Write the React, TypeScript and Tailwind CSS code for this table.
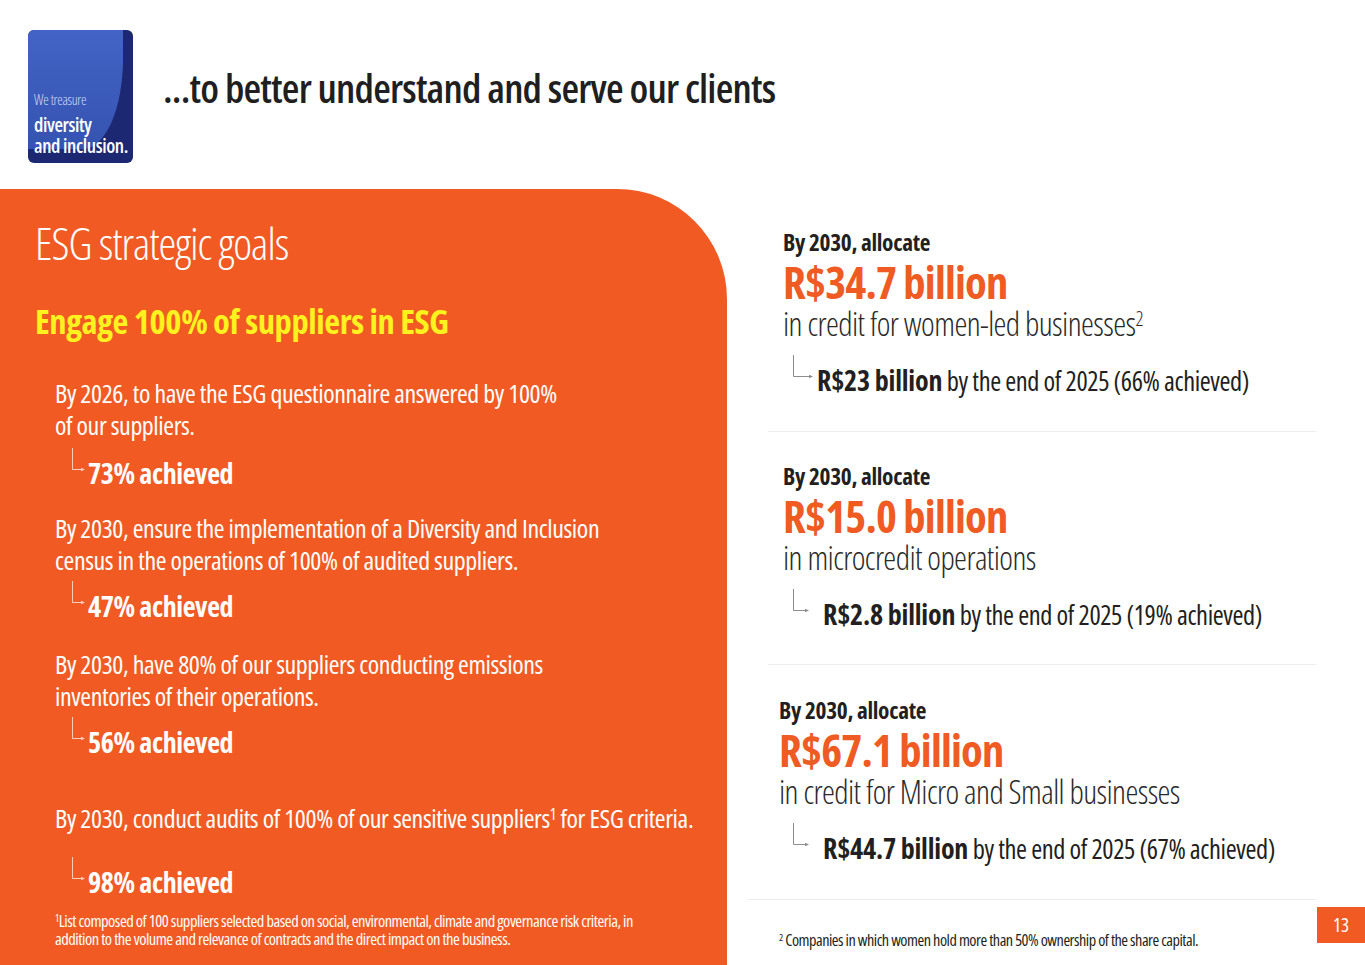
import React from 'react';

const ORANGE = '#f15a22';

function Arrow({ w, color, className = '' }: { w: number; color: string; className?: string }) {
  return (
    <svg width={w} height={24} viewBox={`0 0 ${w} 24`} fill="none" className={`shrink-0 ${className}`}>
      <path d={`M0.5 0V21.5H${w - 4}`} stroke={color} strokeWidth="1" />
      <path d={`M${w - 4} 19.8L${w} 21.5L${w - 4} 23.2Z`} fill={color} />
    </svg>
  );
}

function Logo() {
  return (
    <div className="relative w-[105px] h-[133px] rounded-[6px] overflow-hidden bg-[#1d2873] shrink-0">
      <div className="absolute left-0 top-0 w-[95px] h-[119px] rounded-br-[40px_90px] bg-gradient-to-b from-[#4364c6] to-[#3553b0]" />
      <div className="absolute left-[6px] top-[63px] text-white leading-none">
        <p className="text-[14px] font-light text-[#d5dcf5] tracking-[-0.3px]">We treasure</p>
        <p className="mt-[7px] text-[19.5px] font-semibold tracking-[-0.4px] leading-[21px]">diversity</p>
        <p className="text-[19.5px] font-semibold tracking-[-0.4px] leading-[21px]">and inclusion.</p>
      </div>
    </div>
  );
}

function Achieved({ pct, mt }: { pct: string; mt: string }) {
  return (
    <div className={`flex items-center pl-[37px] h-[40px] ${mt}`}>
      <Arrow w={13} color="rgba(255,255,255,0.7)" className="mb-[27px]" />
      <span className="ml-[3px] text-[28px] font-bold tracking-[-0.4px]">{pct} achieved</span>
    </div>
  );
}

function Goal({ lines, mt }: { lines: React.ReactNode[]; mt: string }) {
  return (
    <div className={`pl-[20px] text-[26px] leading-[32px] font-normal tracking-[-0.4px] ${mt}`}>
      {lines.map((l, i) => (
        <p key={i}>{l}</p>
      ))}
    </div>
  );
}

interface AllocationProps {
  amount: string;
  desc: React.ReactNode;
  bold: string;
  rest: string;
  pl: string;
  arrowW: number;
  gap: string;
}

function Allocation({ amount, desc, bold, rest, pl, arrowW, gap }: AllocationProps) {
  return (
    <div>
      <div className={pl}>
        <p className="text-[23.3px] leading-[26px] font-bold text-[#231f20] tracking-[-0.3px]">By 2030, allocate</p>
        <p className="mt-[3px] text-[44.6px] leading-[48px] font-bold text-[#ef5b22] tracking-[-0.8px]">{amount}</p>
        <p className="text-[32.7px] leading-[36px] font-light text-[#2a2a2a] tracking-[-0.6px]">{desc}</p>
      </div>
      <div className="flex items-center pl-[66px] h-[32px] mt-[22px]">
        <Arrow w={arrowW} color="#8d8d8d" className="mb-[27px]" />
        <p className={`${gap} text-[26.5px] text-[#231f20] tracking-[-0.4px]`}>
          <span className="font-bold text-[28px] tracking-[-0.2px]">{bold}</span> {rest}
        </p>
      </div>
    </div>
  );
}

export default function App() {
  return (
    <div className="relative w-[1365px] h-[965px] overflow-hidden bg-white font-['Open_Sans',sans-serif] [font-stretch:75%]">
      <header className="flex items-start h-[189px] pt-[30px] pl-[28px]">
        <Logo />
        <h1 className="ml-[30px] mt-[34px] text-[40.5px] leading-[48px] font-semibold text-[#1f1f1f] tracking-[-0.8px]">
          ...to better understand and serve our clients
        </h1>
      </header>

      <main className="flex">
        <section className="w-[727px] h-[776px] shrink-0 bg-[#f15a22] rounded-tr-[110px] pl-[35px] pt-[30px] text-white">
          <h2 className="text-[45px] leading-[48px] font-light tracking-[-1px]">ESG strategic goals</h2>
          <h3 className="mt-[34px] text-[34.5px] leading-[40px] font-bold text-[#fff21e] tracking-[-0.4px]">
            Engage 100% of suppliers in ESG
          </h3>

          <Goal mt="mt-[36px]" lines={['By 2026, to have the ESG questionnaire answered by 100%', 'of our suppliers.']} />
          <Achieved pct="73%" mt="mt-[12px]" />

          <Goal
            mt="mt-[19px]"
            lines={[
              'By 2030, ensure the implementation of a Diversity and Inclusion',
              'census in the operations of 100% of audited suppliers.',
            ]}
          />
          <Achieved pct="47%" mt="mt-[10px]" />

          <Goal
            mt="mt-[22px]"
            lines={['By 2030, have 80% of our suppliers conducting emissions', 'inventories of their operations.']}
          />
          <Achieved pct="56%" mt="mt-[10px]" />

          <Goal
            mt="mt-[40px]"
            lines={[
              <>
                By 2030, conduct audits of 100% of our sensitive suppliers<sup className="text-[60%]">1</sup> for ESG
                criteria.
              </>,
            ]}
          />
          <Achieved pct="98%" mt="mt-[28px]" />

          <div className="mt-[10px] pl-[20px] text-[16.5px] leading-[18px] tracking-[-0.5px]">
            <p>
              <sup className="text-[60%]">1</sup>List composed of 100 suppliers selected based on social, environmental,
              climate and governance risk criteria, in
            </p>
            <p>addition to the volume and relevance of contracts and the direct impact on the business.</p>
          </div>
        </section>

        <section className="flex-1 pt-[40px]">
          <Allocation
            pl="pl-[56px]"
            amount="R$34.7 billion"
            desc={
              <>
                in credit for women-led businesses<sup className="text-[60%]">2</sup>
              </>
            }
            bold="R$23 billion"
            rest="by the end of 2025 (66% achieved)"
            arrowW={20}
            gap="ml-[4px]"
          />
          <div className="mt-[35px] ml-[41px] w-[548px] h-px bg-[#ececec]" />

          <div className="mt-[31px]">
            <Allocation
              pl="pl-[56px]"
              amount="R$15.0 billion"
              desc="in microcredit operations"
              bold="R$2.8 billion"
              rest="by the end of 2025 (19% achieved)"
              arrowW={16}
              gap="ml-[14px]"
            />
          </div>
          <div className="mt-[34px] ml-[41px] w-[548px] h-px bg-[#ececec]" />

          <div className="mt-[32px]">
            <Allocation
              pl="pl-[52px]"
              amount="R$67.1 billion"
              desc="in credit for Micro and Small businesses"
              bold="R$44.7 billion"
              rest="by the end of 2025 (67% achieved)"
              arrowW={16}
              gap="ml-[14px]"
            />
          </div>
          <div className="mt-[35px] ml-[21px] w-[568px] h-px bg-[#ececec]" />

          <p className="mt-[31px] pl-[52px] text-[16.3px] leading-[18px] text-[#231f20] tracking-[-0.5px]">
            <sup className="text-[60%]">2</sup> Companies in which women hold more than 50% ownership of the share capital.
          </p>
        </section>
      </main>

      <div
        className="absolute right-0 top-[907px] w-[48px] h-[36px] flex items-center justify-center text-white text-[19px]"
        style={{ backgroundColor: ORANGE }}
      >
        13
      </div>
    </div>
  );
}
